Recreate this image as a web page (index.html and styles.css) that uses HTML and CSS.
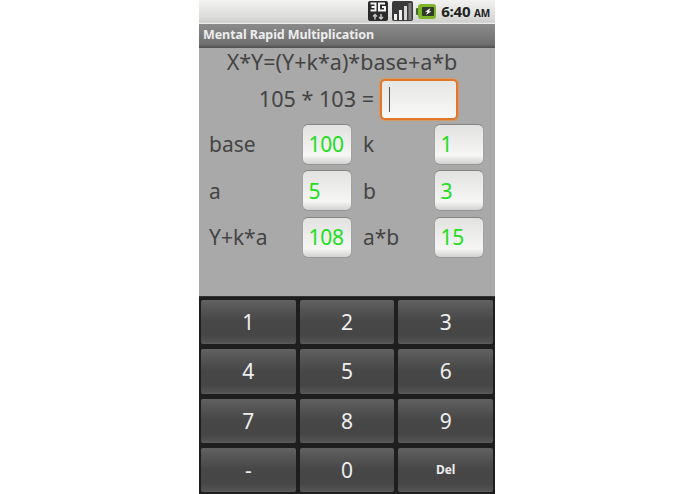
FILE: index.html
```html
<!DOCTYPE html>
<html lang="en">
<head>
<meta charset="utf-8">
<title>Mental Rapid Multiplication</title>
<link rel="stylesheet" href="styles.css">
</head>
<body>
<main class="phone">
  <header class="status">
    <svg class="ico-3g" viewBox="0 0 20 20" width="20" height="20">
      <rect width="20" height="20" rx="2" fill="#2b2b2b"/>
      <path d="M2.500 2.500h5v7h-5M3.500 6h4M17 2.500h-6v7h6V6h-3" fill="none" stroke="#f4f4f4" stroke-width="2"/>
      <path d="M7 18.500v-5M5 15.500l2-2 2 2M13 13v5M11 16l2 2 2-2" fill="none" stroke="#c4c4c4" stroke-width="1.500"/>
    </svg>
    <svg class="ico-sig" viewBox="0 0 21 20" width="21" height="20">
      <rect width="21" height="20" rx="2" fill="#3a3a3a"/>
      <rect x="2" y="13" width="3" height="6" fill="#f2f2f2"/>
      <rect x="7" y="9" width="3" height="10" fill="#f2f2f2"/>
      <rect x="12" y="5" width="3" height="14" fill="#d8d8d8"/>
      <rect x="16.500" y="2" width="3" height="17" fill="#7d7d7d"/>
    </svg>
    <svg class="ico-bat" viewBox="0 0 20 15" width="20" height="15">
      <rect x="0" y="4" width="3" height="7" rx="1" fill="#3f6a22"/>
      <rect x="2" y="0" width="18" height="15" rx="3" fill="#7fb52a"/>
      <rect x="6" y="3" width="12" height="9" rx="1" fill="#2c3a26"/>
      <path d="M14.500 4L9 7.700h2.500L10 11l5.500-3.700H13z" fill="#fff"/>
    </svg>
    <span class="clock">6:40 <small>AM</small></span>
  </header>
  <h1 class="title">Mental Rapid Multiplication</h1>
  <section class="work">
    <p class="formula">X*Y=(Y+k*a)*base+a*b</p>
    <div class="question">
      <span class="sum">105 * 103 =</span>
      <div class="answer"><i class="caret"></i></div>
    </div>
    <div class="params">
      <span class="lbl">base</span><output class="val">100</output>
      <span class="lbl right">k</span><output class="val">1</output>
      <span class="lbl">a</span><output class="val">5</output>
      <span class="lbl right">b</span><output class="val">3</output>
      <span class="lbl">Y+k*a</span><output class="val">108</output>
      <span class="lbl right">a*b</span><output class="val">15</output>
    </div>
  </section>
  <section class="keypad">
    <button class="key">1</button><button class="key">2</button><button class="key">3</button>
    <button class="key">4</button><button class="key">5</button><button class="key">6</button>
    <button class="key">7</button><button class="key">8</button><button class="key">9</button>
    <button class="key">-</button><button class="key">0</button><button class="key del">Del</button>
  </section>
</main>
</body>
</html>
```
FILE: styles.css
```css
* { box-sizing: border-box; }
html, body { margin: 0; height: 100%; background: #fff; }
body { font-family: "Noto Sans", "Open Sans", sans-serif; overflow: hidden; }
.phone { width: 296px; height: 494px; margin-left: 199px; display: flex; flex-direction: column; background: #a9a9a9; }

.status { height: 24px; flex: none; display: flex; align-items: center; justify-content: flex-end; padding: 0 5px 2px 0; background: linear-gradient(#f2f2f0, #dcdcda 70%, #cfcfcd 92%, #f4f4f4); }
.ico-sig { margin: 0 3px 0 4px; }
.clock { font: 700 15px "Open Sans", sans-serif; color: #222; margin-left: 5px; white-space: nowrap; letter-spacing: -0.2px; }
.clock small { font-size: 10px; }

.title { margin: 0; height: 24px; flex: none; padding-left: 4px; font: 700 12.500px/22px "Noto Sans", sans-serif; color: #eee; letter-spacing: -0.07px; background: linear-gradient(#8b8b8b, #6f6f6f 85%, #4e4e4e); }

.work { height: 248px; flex: none; display: flex; flex-direction: column; color: #444; }
.formula { margin: 1px 0 0; height: 29px; padding-right: 10px; font-size: 21.500px; line-height: 25px; text-align: center; }
.question { height: 41px; margin-top: 1px; display: flex; justify-content: flex-end; align-items: center; gap: 6px; padding-right: 37px; font-size: 21.600px; }
.sum { padding-bottom: 2px; }
.answer { width: 78px; height: 41px; border: 2px solid #e0782a; border-radius: 5px; background: linear-gradient(#e6e6e4, #f8f8f6); display: flex; align-items: center; padding-left: 7px; box-shadow: 0 0 1px 1px #d89a60; }
.caret { display: block; width: 1px; height: 25px; background: #555; }

.params { display: grid; grid-template-columns: 103px 50px 82px 50px; grid-auto-rows: 41px; row-gap: 5.500px; margin-top: 3.500px; font-size: 21px; }
.lbl { display: flex; align-items: center; padding: 0 0 0 10px; }
.right { padding-left: 11px; }
.val { display: flex; align-items: center; padding: 0 0 0 5.500px; font-size: 21px; letter-spacing: -0.3px; color: #22dd22; border: 1px solid; border-color: #858585 #a2a2a2 #979797; border-radius: 6px; background: linear-gradient(#e2e2e0, #f6f6f4 78%, #d2d2d0); }

.keypad { flex: 1; display: grid; grid-template-columns: repeat(3, 1fr); grid-template-rows: repeat(4, 1fr); gap: 5px 4px; padding: 3px 2px 2px; background: #1e1e1e; border-top: 1px solid #333; }
.key { border: 0; border-radius: 2px; padding: 0; font: 400 21px "Noto Sans", sans-serif; color: #eee; background: linear-gradient(#626262 0, #555 20%, #474747 48%, #464646 80%, #525252 96%, #5e5e5e 100%); }
.del { font-size: 12px; font-weight: 700; }
```
